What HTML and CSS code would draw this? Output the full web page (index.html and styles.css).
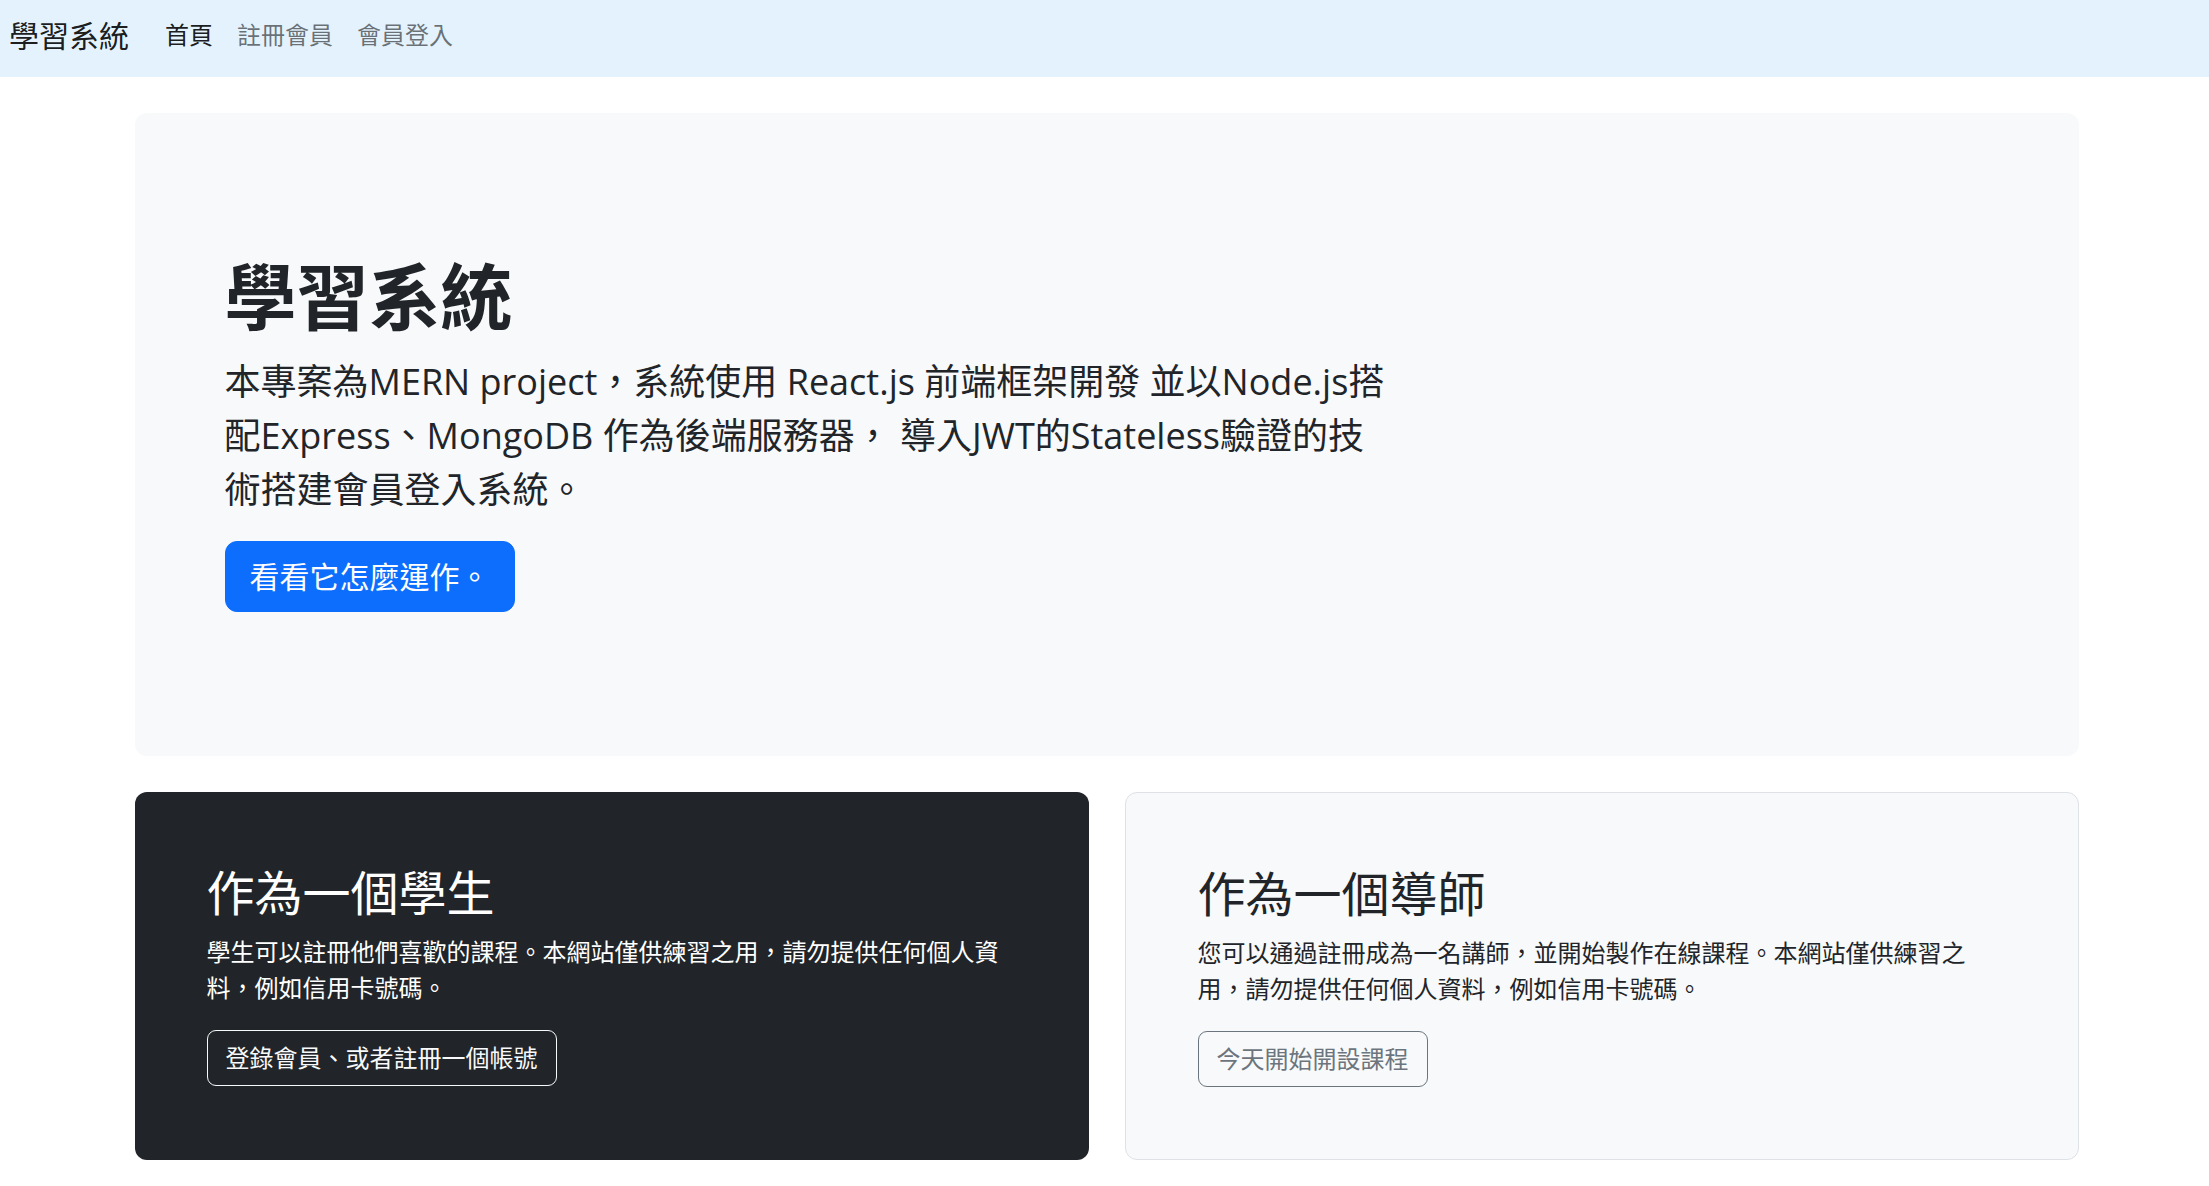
FILE: index.html
```html
<!DOCTYPE html>
<html lang="zh-Hant">
<head>
<meta charset="utf-8">
<title>學習系統</title>
<link rel="stylesheet" href="styles.css">
</head>
<body>
<nav class="navbar">
  <a class="brand" href="#">學習系統</a>
  <ul class="nav">
    <li><a class="nav-link active" href="#">首頁</a></li>
    <li><a class="nav-link" href="#">註冊會員</a></li>
    <li><a class="nav-link" href="#">會員登入</a></li>
  </ul>
</nav>
<main class="container">
  <section class="jumbo">
    <div class="jumbo-inner">
      <h1 class="display">學習系統</h1>
      <p class="lead">本專案為MERN project，系統使用 React.js 前端框架開發 並以Node.js搭配Express、MongoDB 作為後端服務器， 導入JWT的Stateless驗證的技術搭建會員登入系統。</p>
      <button class="btn btn-lg btn-primary" type="button">看看它怎麼運作。</button>
    </div>
  </section>
  <div class="cards">
    <div class="card card-dark">
      <h2 class="card-title">作為一個學生</h2>
      <p class="card-text">學生可以註冊他們喜歡的課程。本網站僅供練習之用，請勿提供任何個人資料，例如信用卡號碼。</p>
      <button class="btn btn-outline-light" type="button">登錄會員、或者註冊一個帳號</button>
    </div>
    <div class="card card-light">
      <h2 class="card-title">作為一個導師</h2>
      <p class="card-text">您可以通過註冊成為一名講師，並開始製作在線課程。本網站僅供練習之用，請勿提供任何個人資料，例如信用卡號碼。</p>
      <button class="btn btn-outline-secondary" type="button">今天開始開設課程</button>
    </div>
  </div>
</main>
</body>
</html>
```
FILE: styles.css
```css
* { box-sizing: border-box; }

body {
  margin: 0;
  font-family: "Open Sans", "Noto Sans CJK TC", sans-serif;
  color: #212529;
  background: #fff;
}

.navbar {
  display: flex;
  align-items: center;
  height: 77px;
  padding: 0 9px 7px;
  background: #e3f2fd;
}

.brand {
  font-size: 30px;
  line-height: 45px;
  margin-right: 24px;
  color: rgba(0, 0, 0, 0.9);
  text-decoration: none;
}

.nav {
  display: flex;
  list-style: none;
  margin: 0;
  padding: 0;
}

.nav-link {
  display: block;
  padding: 12px;
  font-size: 24px;
  line-height: 36px;
  color: rgba(0, 0, 0, 0.55);
  text-decoration: none;
}

.nav-link.active { color: rgba(0, 0, 0, 0.9); }

.container {
  width: 1944px;
  margin-left: calc(50% - 970px);
  padding-top: 36px;
}

.jumbo {
  background: #f8f9fa;
  border-radius: 12px;
  padding: 72px;
  margin-bottom: 36px;
}

.jumbo-inner { padding: 72px 18px; }

.display {
  font-size: 72px;
  font-weight: 700;
  line-height: 1.2;
  margin: -4px 0 16px;
}

.lead {
  font-size: 36px;
  line-height: 1.5;
  margin: 0 0 24px;
  max-width: 1164px;
}

.btn {
  font-family: inherit;
  background: transparent;
  cursor: pointer;
  font-size: 24px;
  line-height: 36px;
  padding: 9px 18px;
  border: 1px solid transparent;
  border-radius: 9px;
}

.btn-lg {
  font-size: 30px;
  line-height: 45px;
  padding: 12px 24px;
  border-radius: 12px;
}

.btn-primary {
  background: #0d6efd;
  border-color: #0d6efd;
  color: #fff;
}

.cards {
  display: grid;
  grid-template-columns: 1fr 1fr;
  gap: 36px;
}

.card {
  padding: 72px;
  border-radius: 12px;
}

.card-dark {
  background: #212529;
  color: #fff;
}

.card-light {
  background: #f8f9fa;
  border: 1px solid #dee2e6;
}

.card-title {
  font-size: 48px;
  font-weight: 400;
  line-height: 1.2;
  margin: 0 0 12px;
}

.card-text {
  font-size: 24px;
  line-height: 1.5;
  margin: 0 0 24px;
}

.btn-outline-light {
  color: #f8f9fa;
  border-color: #f8f9fa;
}

.btn-outline-secondary {
  color: #6c757d;
  border-color: #6c757d;
}
```
